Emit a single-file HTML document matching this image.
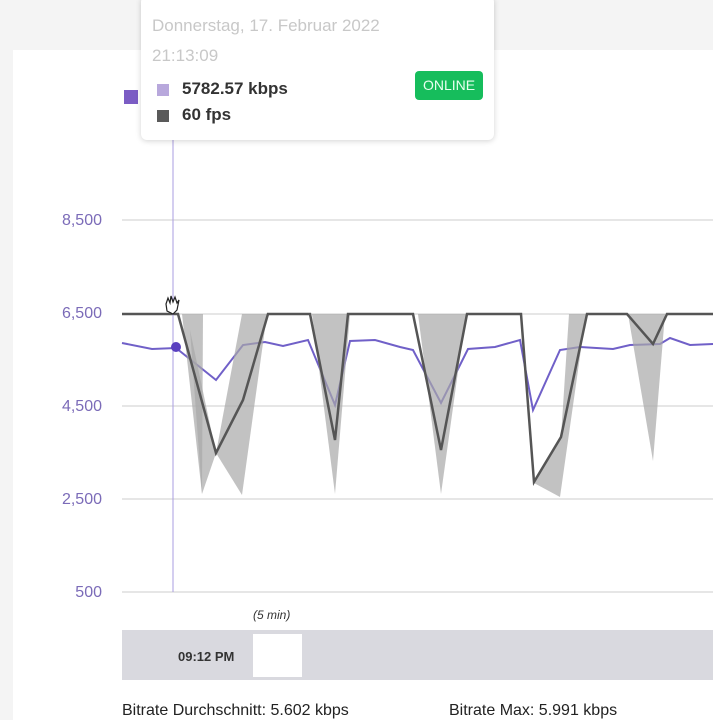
<!DOCTYPE html>
<html><head><meta charset="utf-8"><style>
body{margin:0;width:713px;height:712px;overflow:hidden;background:#f4f4f4;font-family:"Liberation Sans",sans-serif;position:relative}
.panel{position:absolute;left:13px;top:50px;width:700px;height:670px;background:#fff}
.ax{position:absolute;left:40px;width:62px;text-align:right;color:#7b6bb8;font-size:16px}
.tip{position:absolute;left:141px;top:-4px;width:353px;height:144px;background:#fff;border-radius:6px;box-shadow:0 1px 6px rgba(0,0,0,.18)}
</style></head><body>
<div class="panel"></div>
<div style="position:absolute;left:124px;top:90px;width:14px;height:14px;background:#7b5cc4"></div>
<div class="ax" style="top:212px">8,500</div>
<div class="ax" style="top:305px">6,500</div>
<div class="ax" style="top:398px">4,500</div>
<div class="ax" style="top:491px">2,500</div>
<div class="ax" style="top:584px">500</div>
<svg style="position:absolute;left:0;top:0" width="713" height="712">
<g stroke="#e6e6e6" stroke-width="2"><line x1="122" y1="220" x2="713" y2="220"/><line x1="122" y1="314" x2="713" y2="314"/><line x1="122" y1="406" x2="713" y2="406"/><line x1="122" y1="499" x2="713" y2="499"/><line x1="122" y1="592" x2="713" y2="592"/></g>
<polyline fill="none" stroke="#7060c8" stroke-width="2" points="122,343 152,349 176,348 216,380 243,345 265,342 283,346 308,340 335,405 350,341 375,340 400,347 413,350 441,403 468,349 495,347 520,340 533,410 560,350 580,347 613,349 630,345 660,344 670,338 690,345 713,344"/>
<g fill="#a8a8a8" fill-opacity="0.7">
<polygon points="182,314 203,314 202,494"/><polygon points="190,330 216,453 202,494"/>
<polygon points="242,314 267,314 242,495 216,453"/>
<polygon points="312,314 350,314 335,494"/>
<polygon points="418,314 466,314 441,494"/>
<polygon points="534,483 560,497 586,314 569,314 561,437"/>
<polygon points="628,314 665,314 653,461"/>
</g>
<polyline fill="none" stroke="#555" stroke-width="2.5" points="122,314 178,314 216,453 243,400 268,314 310,314 335,440 348,314 413,314 441,450 467,314 521,314 534,482 561,437 587,314 627,314 653,344 667,314 713,314"/>
<line x1="173" y1="140" x2="173" y2="592" stroke="#a99ee0" stroke-width="1"/>
<circle cx="176" cy="347" r="5" fill="#5a40c0"/>
<path d="M166,304 l2,-6 2,5 1,-7 2,6 2,-5 2,6 2,-3 -2,10 -4,4 -6,-3 z" fill="#fff" stroke="#222" stroke-width="1.2"/>
</svg>
<div class="tip">
<div style="position:absolute;left:11px;top:20px;font-size:17px;color:#c8c8c8">Donnerstag, 17. Februar 2022</div>
<div style="position:absolute;left:11px;top:50px;font-size:17px;color:#c8c8c8">21:13:09</div>
<div style="position:absolute;left:16px;top:88px;width:12px;height:12px;background:#b8a8dc"></div>
<div style="position:absolute;left:41px;top:83px;font-size:17px;font-weight:bold;color:#333">5782.57 kbps</div>
<div style="position:absolute;left:16px;top:114px;width:12px;height:12px;background:#5a5a5a"></div>
<div style="position:absolute;left:41px;top:109px;font-size:17px;font-weight:bold;color:#333">60 fps</div>
<div style="position:absolute;left:274px;top:75px;width:68px;height:29px;background:#16bd5c;border-radius:4px;color:#e8fff0;font-size:14px;line-height:29px;text-align:center">ONLINE</div>
</div>
<div style="position:absolute;left:253px;top:608px;font-size:12px;font-style:italic;color:#333">(5 min)</div>
<div style="position:absolute;left:122px;top:630px;width:591px;height:50px;background:#d9d9df"></div>
<div style="position:absolute;left:178px;top:649px;font-size:13px;font-weight:bold;color:#333">09:12 PM</div>
<div style="position:absolute;left:253px;top:634px;width:49px;height:43px;background:#fff"></div>
<div style="position:absolute;left:122px;top:702px;font-size:16px;color:#222;white-space:nowrap">Bitrate Durchschnitt: 5.602 kbps</div>
<div style="position:absolute;left:449px;top:702px;font-size:16px;color:#222;white-space:nowrap">Bitrate Max: 5.991 kbps</div>
</body></html>
